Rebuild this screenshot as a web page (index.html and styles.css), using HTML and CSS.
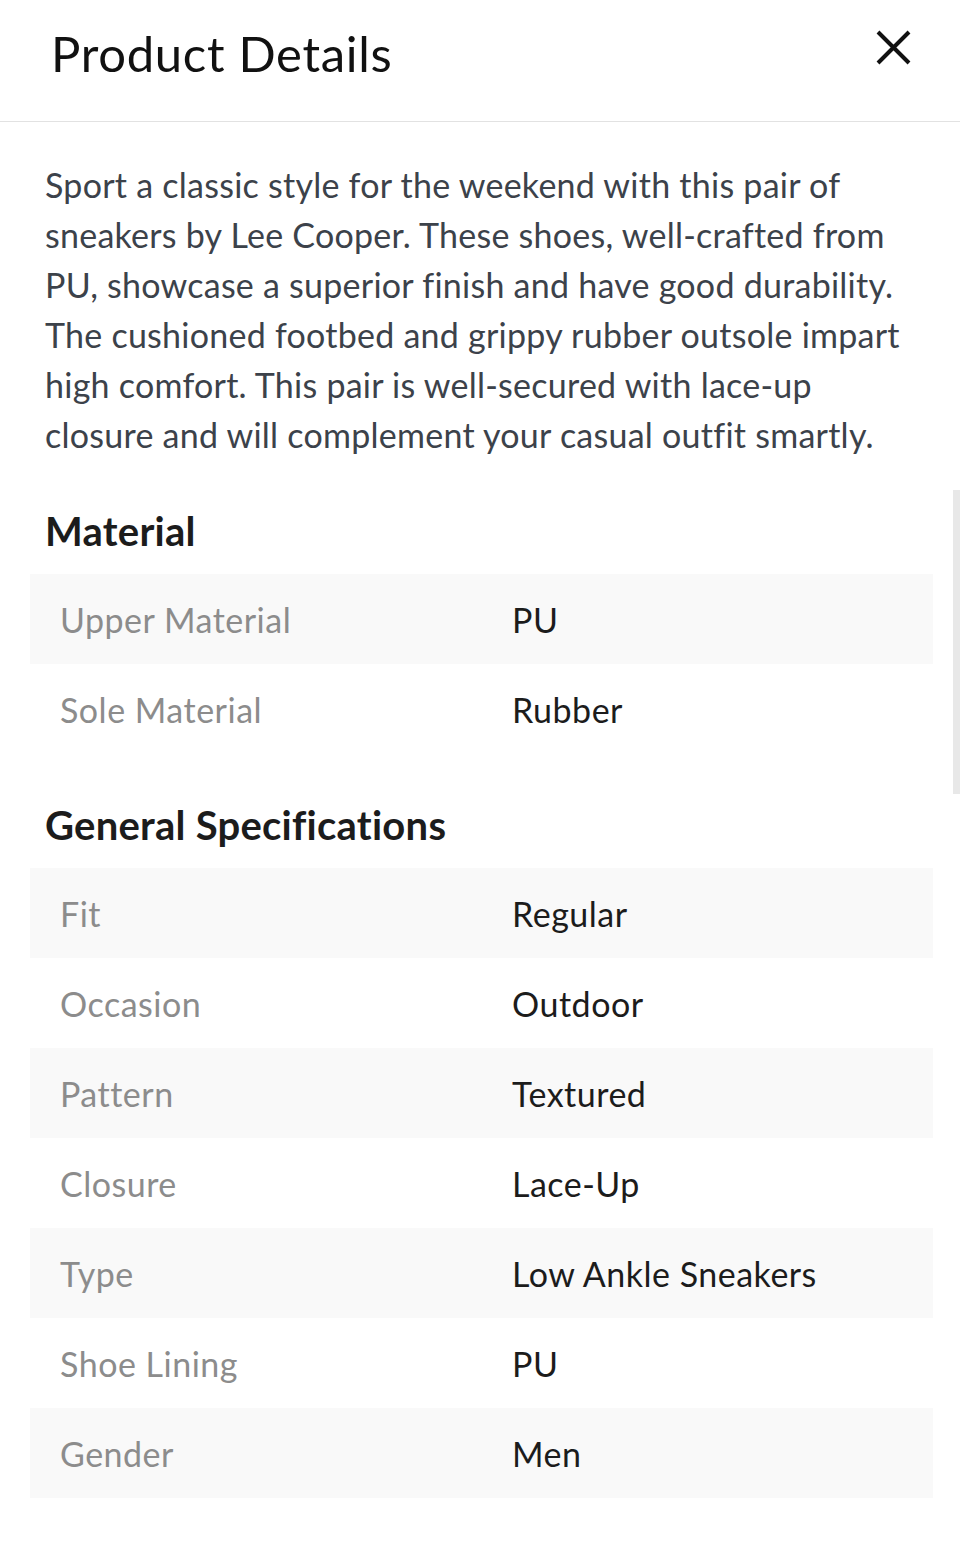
FILE: index.html
```html
<!DOCTYPE html>
<html lang="en">
<head>
<meta charset="utf-8">
<title>Product Details</title>
<link rel="stylesheet" href="styles.css">
</head>
<body>
<div class="sheet">
  <header class="header">
    <h1 class="title">Product Details</h1>
    <button class="close" aria-label="Close">
      <svg width="35" height="35" viewBox="0 0 35 35"><path d="M2 2 L33 33 M33 2 L2 33" stroke="#111" stroke-width="4" fill="none"/></svg>
    </button>
  </header>
  <main class="content">
    <p class="desc">Sport a classic style for the weekend with this pair of sneakers by Lee Cooper. These shoes, well-crafted from PU, showcase a superior finish and have good durability. The cushioned footbed and grippy rubber outsole impart high comfort. This pair is well-secured with lace-up closure and will complement your casual outfit smartly.</p>

    <section class="section">
      <h2 class="heading">Material</h2>
      <div class="table">
        <div class="row"><span class="label">Upper Material</span><span class="value">PU</span></div>
        <div class="row"><span class="label">Sole Material</span><span class="value">Rubber</span></div>
      </div>
    </section>

    <section class="section">
      <h2 class="heading">General Specifications</h2>
      <div class="table">
        <div class="row"><span class="label">Fit</span><span class="value">Regular</span></div>
        <div class="row"><span class="label">Occasion</span><span class="value">Outdoor</span></div>
        <div class="row"><span class="label">Pattern</span><span class="value">Textured</span></div>
        <div class="row"><span class="label">Closure</span><span class="value">Lace-Up</span></div>
        <div class="row"><span class="label">Type</span><span class="value">Low Ankle Sneakers</span></div>
        <div class="row"><span class="label">Shoe Lining</span><span class="value">PU</span></div>
        <div class="row"><span class="label">Gender</span><span class="value">Men</span></div>
      </div>
    </section>
  </main>
  <div class="scrollbar"></div>
</div>
</body>
</html>
```
FILE: styles.css
```css
* { box-sizing: border-box; }
html, body { margin: 0; padding: 0; background: #fff; }
body { font-family: Lato, "Open Sans", sans-serif; }

.sheet { position: relative; min-height: 1553px; }

.header {
  height: 122px;
  border-bottom: 1px solid #e2e2e2;
  display: flex;
  justify-content: space-between;
  align-items: flex-start;
  padding: 23px 49px 0 51px;
}
.title {
  margin: 0;
  font-size: 49px;
  line-height: 60px;
  font-weight: 400;
  letter-spacing: 0.7px;
  color: #111;
}
.close {
  margin-top: 7px;
  padding: 0;
  border: 0;
  background: none;
  width: 35px;
  height: 35px;
  display: block;
}
.close svg { display: block; }

.content { padding: 38px 27px 0 30px; }

.desc {
  margin: 0;
  padding: 0 13px 0 15px;
  font-size: 34px;
  line-height: 50px;
  letter-spacing: 0.25px;
  color: #3c424a;
}

.section { margin-top: 50px; }
.heading {
  margin: 0 0 22px;
  padding-left: 15px;
  font-size: 40px;
  line-height: 42px;
  font-weight: 700;
  letter-spacing: 0.25px;
  color: #1c1c1c;
}

.table { display: flex; flex-direction: column; }
.row {
  height: 90px;
  display: grid;
  grid-template-columns: 482px 1fr;
  align-items: center;
  font-size: 34px;
  letter-spacing: 0.5px;
}
.row:nth-child(odd) { background: #f9f9f9; }
.label { padding-left: 30px; color: #8c8c8c; }
.value { color: #1c1c1c; }

.scrollbar {
  position: absolute;
  right: 0;
  top: 490px;
  width: 7px;
  height: 304px;
  background: #e8e8e8;
}
```
